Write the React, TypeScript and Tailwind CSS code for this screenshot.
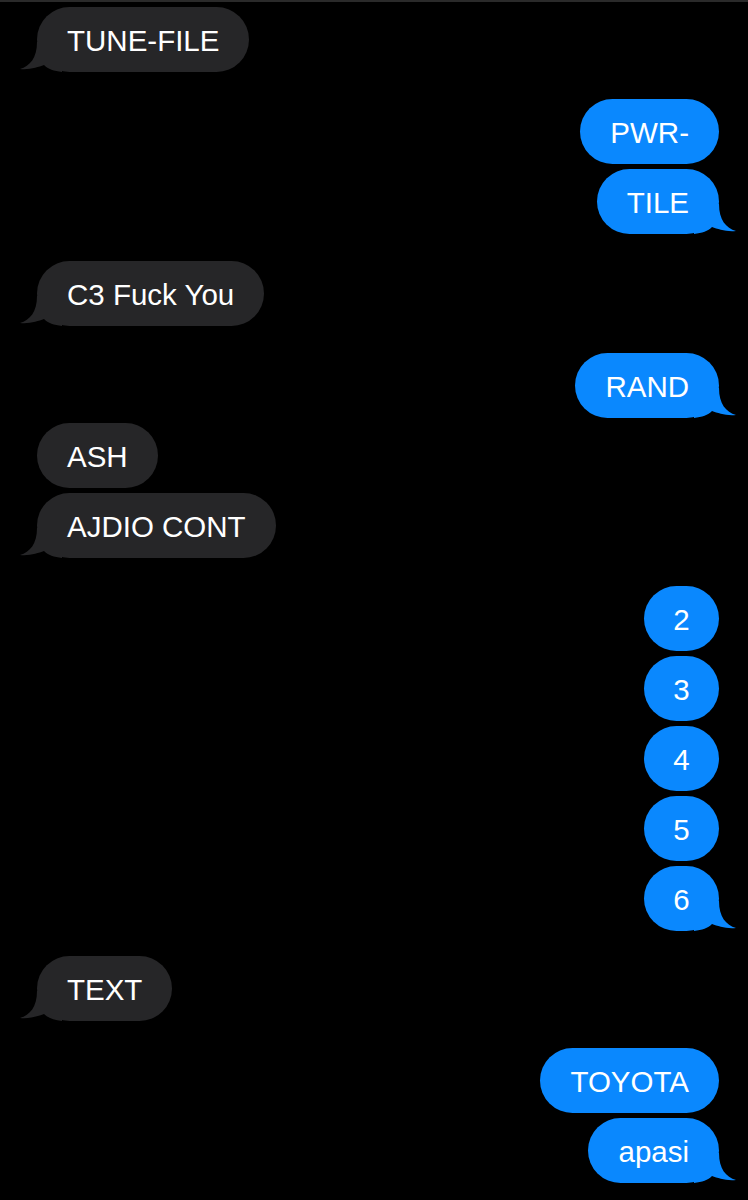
type Msg = { text: string; me: boolean; tail: boolean; mt: string };

const messages: Msg[] = [
  { text: "TUNE-FILE", me: false, tail: true, mt: "mt-0" },
  { text: "PWR-", me: true, tail: false, mt: "mt-[27px]" },
  { text: "TILE", me: true, tail: true, mt: "mt-[5px]" },
  { text: "C3 Fuck You", me: false, tail: true, mt: "mt-[27px]" },
  { text: "RAND", me: true, tail: true, mt: "mt-[27px]" },
  { text: "ASH", me: false, tail: false, mt: "mt-[5px]" },
  { text: "AJDIO CONT", me: false, tail: true, mt: "mt-[5px]" },
  { text: "2", me: true, tail: false, mt: "mt-[28px]" },
  { text: "3", me: true, tail: false, mt: "mt-[5px]" },
  { text: "4", me: true, tail: false, mt: "mt-[5px]" },
  { text: "5", me: true, tail: false, mt: "mt-[5px]" },
  { text: "6", me: true, tail: true, mt: "mt-[5px]" },
  { text: "TEXT", me: false, tail: true, mt: "mt-[25px]" },
  { text: "TOYOTA", me: true, tail: false, mt: "mt-[27px]" },
  { text: "apasi", me: true, tail: true, mt: "mt-[5px]" },
];

function Tail({ me }: { me: boolean }) {
  // little curl at the bottom corner of the last bubble in a run
  if (me) {
    return (
      <svg
        className="absolute bottom-0 right-[-17px]"
        width="45"
        height="30"
        viewBox="0 0 45 30"
      >
        <path
          d="M28 0 C28 16 35 24 45 27 C35 28 27 25 21 23 C17 27 11 29 3 30 L3 0 Z"
          fill="#0a88fe"
        />
      </svg>
    );
  }
  return (
    <svg
      className="absolute bottom-0 left-[-17px]"
      width="45"
      height="30"
      viewBox="0 0 45 30"
    >
      <path
        d="M17 0 C17 16 10 24 0 27 C10 28 18 25 24 23 C28 27 34 29 42 30 L42 0 Z"
        fill="#262628"
      />
    </svg>
  );
}

function Bubble({ msg }: { msg: Msg }) {
  const single = msg.text.length === 1;
  return (
    <div className={`flex ${msg.me ? "justify-end" : "justify-start"} ${msg.mt}`}>
      <div
        className={`relative flex h-[65px] items-center justify-center rounded-[33px] pt-[2px] text-[29.5px] leading-none text-white ${
          msg.me ? "bg-[#0a88fe]" : "bg-[#262628]"
        } ${single ? "w-[75px]" : "px-[30px]"}`}
      >
        {msg.tail && <Tail me={msg.me} />}
        <span className="relative">{msg.text}</span>
      </div>
    </div>
  );
}

export default function App() {
  return (
    <div
      className="min-h-[1200px] w-[748px] bg-black border-t-2 border-[#2a2a2a] pl-[37px] pr-[29px] pt-[5px]"
      style={{ fontFamily: '"Liberation Sans", Arial, sans-serif' }}
    >
      {messages.map((m, i) => (
        <Bubble key={i} msg={m} />
      ))}
    </div>
  );
}
